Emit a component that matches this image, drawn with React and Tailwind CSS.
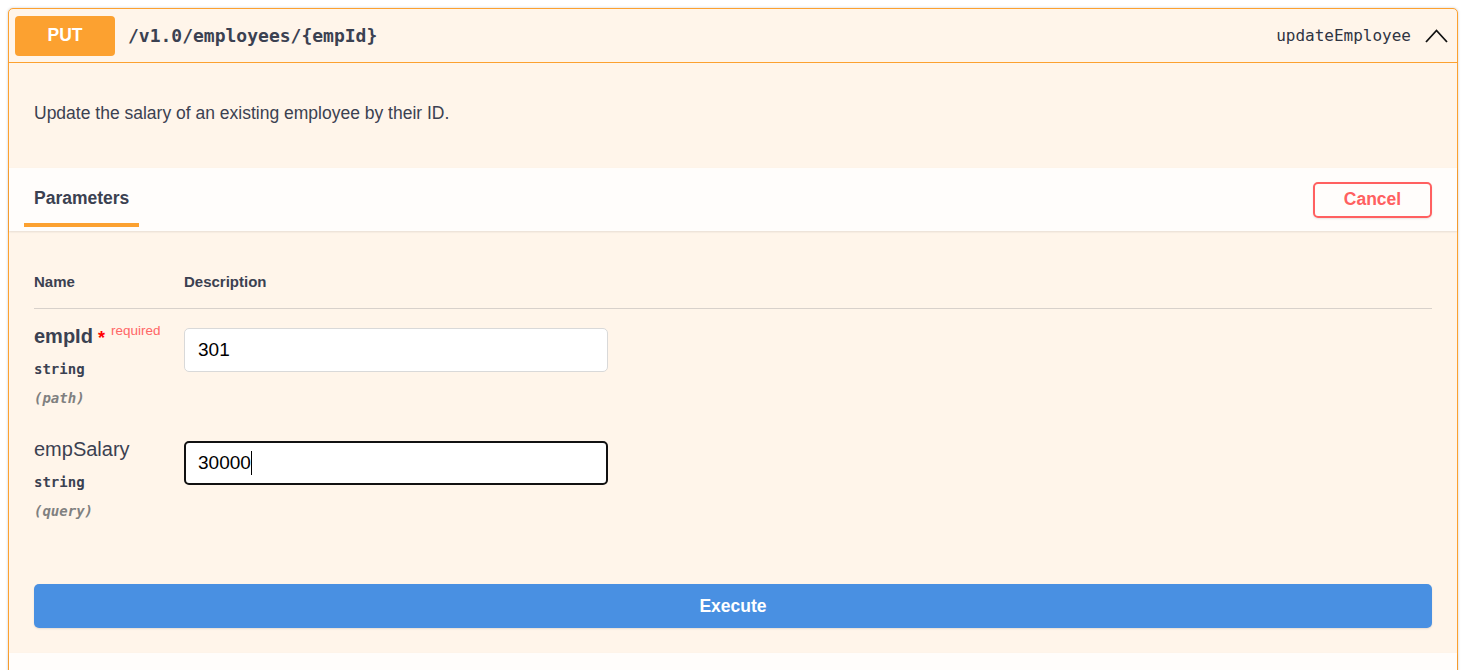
import React from 'react';

const sans = { fontFamily: '"Liberation Sans", Arial, sans-serif' };
const mono = { fontFamily: '"DejaVu Sans Mono", monospace' };

// 파라미터 한 줄 (이름 / 타입 / 위치 + 입력칸)
function ParamRow({ name, required, type, location, value, focused }) {
  return (
    <div className="flex pt-[12px] pb-[15px]">
      <div className="w-[150px]">
        <div className="h-[30px] leading-[30px] flex items-start text-[20px] text-[#3b4151]">
          <span className={required ? 'font-bold' : ''}>{name}</span>
          {required && (
            <>
              <span className="ml-[5px] text-[red] font-bold text-[18px] leading-[34px]">*</span>
              <span className="ml-[6px] text-[13.5px] leading-[20px] text-[#ff6666]">required</span>
            </>
          )}
        </div>
        <div className="mt-[9px] leading-[18px] text-[14px] font-bold text-[#3b4151]" style={mono}>
          {type}
        </div>
        <div className="mt-[11px] leading-[18px] text-[14px] font-bold italic text-[#808080]" style={mono}>
          ({location})
        </div>
      </div>
      <div className="pt-[7px]">
        <div
          className={
            'w-[424px] h-[44px] rounded-[5px] bg-white flex items-center text-[19px] text-black ' +
            (focused ? 'border-2 border-[#111111] px-[12px]' : 'border border-[#d9d9d9] px-[13px]')
          }
        >
          <span>{value}</span>
          {focused && <span className="w-px h-[24px] bg-black" />}
        </div>
      </div>
    </div>
  );
}

export default function App() {
  return (
    <div className="min-h-screen bg-white pt-2 pl-2" style={sans}>
      <div className="w-[1450px] border border-[#fca130] bg-[#fff5ea] rounded-[5px] shadow-[0_0_3px_rgba(0,0,0,0.19)]">

        {/* 1. 헤더 (메서드, 경로) */}
        <div className="h-[54px] flex items-center px-[6px] border-b border-[#fca130]">
          <span className="w-[100px] h-[40px] rounded-[4px] bg-[#fca130] text-white font-bold text-[17.5px] flex items-center justify-center">
            PUT
          </span>
          <span className="ml-[13px] text-[18px] font-bold text-[#3b4151]" style={mono}>
            /v1.0/employees/{'{empId}'}
          </span>
          <div className="flex-1" />
          <span className="ml-px text-[16px] text-[#2f3442]" style={mono}>updateEmployee</span>
          <svg className="ml-[14px] mr-[3px]" width="23" height="14" viewBox="0 0 23 14">
            <polyline points="1,13 11.5,1.5 22,13" fill="none" stroke="#111" strokeWidth="1.8" />
          </svg>
        </div>

        {/* 2. 설명 */}
        <div className="h-[105px] px-[25px] pt-[40px]">
          <p className="text-[17.5px] leading-[20px] text-[#3b4151]">
            Update the salary of an existing employee by their ID.
          </p>
        </div>

        {/* 3. Parameters 탭 헤더 */}
        <div className="h-[63px] bg-[#fffdfb] shadow-[0_1px_2px_rgba(0,0,0,0.1)] flex justify-between px-[25px]">
          <div className="pt-[20px]">
            <div className="text-[17.5px] leading-[20px] font-bold text-[#3b4151]">Parameters</div>
            <div className="mt-[15px] h-[4px] w-[115px] -ml-[10px] bg-[#fca130]" />
          </div>
          <button className="self-center w-[119px] h-[36px] border-2 border-[#ff6060] rounded-[5px] bg-transparent text-[#ff6060] font-bold text-[17.5px] shadow-[0_1px_2px_rgba(0,0,0,0.1)]">
            Cancel
          </button>
        </div>

        {/* 4. 파라미터 테이블 */}
        <div className="px-[25px] pt-[27px]">
          <div className="flex pt-[15px] pb-[17px] border-b border-[#3b4151]/20 text-[15px] leading-[18px] font-bold text-[#3b4151]">
            <div className="w-[150px]">Name</div>
            <div>Description</div>
          </div>
          <ParamRow name="empId" required type="string" location="path" value="301" />
          <ParamRow name="empSalary" type="string" location="query" value="30000" focused />

          <button className="mt-[49px] mb-[25px] w-full h-[44px] rounded-[5px] bg-[#4990e2] text-white font-bold text-[17.5px] shadow-[0_1px_2px_rgba(0,0,0,0.1)]">
            Execute
          </button>
        </div>

        {/* 5. Responses 영역 (잘림) */}
        <div className="h-[60px] bg-[#fffdfb] shadow-[0_1px_2px_rgba(0,0,0,0.1)]" />
      </div>
    </div>
  );
}
